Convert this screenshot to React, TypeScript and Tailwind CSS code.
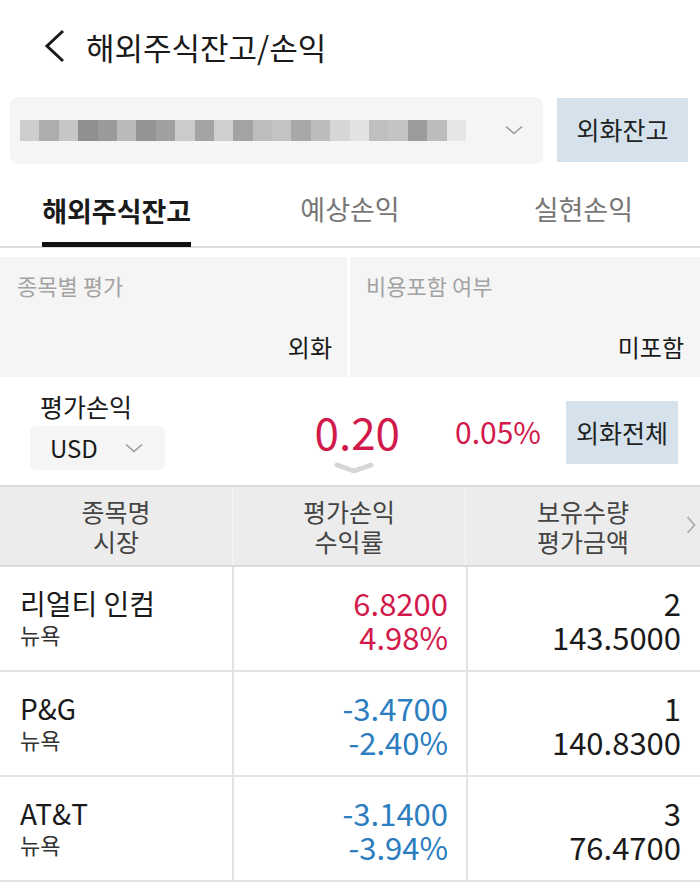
import React from 'react';

const FONT = '"Noto Sans CJK KR", "Noto Sans", sans-serif';

const RED = 'text-[#d2194c]';
const BLUE = 'text-[#2b7dc0]';

// blurred account number blocks
const blurShades = [
    '#cdcdcd', '#adadad', '#c6c6c6', '#8f8f8f', '#9a9a9a', '#bababa', '#949494', '#a0a0a0',
    '#cbcbcb', '#a4a4a4', '#cfcfcf', '#a3a3a3', '#bdbdbd', '#c3c3c3', '#a8a8a8', '#bcbcbc',
    '#d6d6d6', '#e2e2e2', '#bfbfbf', '#c4c4c4', '#9b9b9b', '#bcbcbc', '#e6e6e6',
];

interface Holding {
    name: string;
    market: string;
    pl: string;
    rate: string;
    qty: string;
    amount: string;
    up: boolean;
}

const holdings: Holding[] = [
    { name: '리얼티 인컴', market: '뉴욕', pl: '6.8200', rate: '4.98%', qty: '2', amount: '143.5000', up: true },
    { name: 'P&G', market: '뉴욕', pl: '-3.4700', rate: '-2.40%', qty: '1', amount: '140.8300', up: false },
    { name: 'AT&T', market: '뉴욕', pl: '-3.1400', rate: '-3.94%', qty: '3', amount: '76.4700', up: false },
];

const SmallChevron = ({ className = '' }: { className?: string }) => (
    <svg width="18" height="10" viewBox="0 0 18 10" className={className}>
        <path d="M1 1.5 L9 8.5 L17 1.5" fill="none" stroke="currentColor" strokeWidth="1.6" />
    </svg>
);

export default function App() {
    return (
        <div className="w-[700px] h-[891px] bg-white overflow-hidden text-[#1a1a1a]" style={{ fontFamily: FONT }}>
            {/* Header */}
            <div className="h-[92px] flex items-center pl-[42px] gap-[20px]">
                <svg width="24" height="34" viewBox="0 0 24 34">
                    <path d="M21 2 L5 17 L21 32" fill="none" stroke="#1a1a1a" strokeWidth="3" />
                </svg>
                <span className="text-[31px] leading-none">해외주식잔고/손익</span>
            </div>

            {/* Account selector */}
            <div className="flex items-center pl-[10px] pr-[12px] gap-[14px] h-[76px]">
                <div className="flex-1 h-[67px] bg-[#f5f5f5] rounded-[8px] flex items-center pl-[10px] pr-[20px]">
                    <div className="flex-1 flex">
                        {blurShades.map((c, i) => (
                            <div key={i} className="w-[19.4px] h-[21px]" style={{ backgroundColor: c }} />
                        ))}
                    </div>
                    <SmallChevron className="text-[#9a9a9a]" />
                </div>
                <button className="w-[131px] h-[64px] bg-[#d5e2ec] text-[25px] text-[#222]">외화잔고</button>
            </div>

            {/* Tabs */}
            <div className="grid grid-cols-3 h-[80px] border-b-2 border-[#dcdcdc]">
                <div className="flex justify-center">
                    <div className="flex flex-col justify-end">
                        <span className="text-[27px] font-bold leading-none mb-[18px]">해외주식잔고</span>
                        <div className="h-[5px] bg-[#111] -mb-[1px]" />
                    </div>
                </div>
                <div className="flex justify-center items-center pt-[10px] pb-[6px] text-[27px] text-[#777]">예상손익</div>
                <div className="flex justify-center items-center pt-[10px] pb-[6px] text-[27px] text-[#777]">실현손익</div>
            </div>

            {/* Options panel */}
            <div className="mt-[9px] grid grid-cols-[347px_1fr] gap-[3px] h-[120px]">
                <div className="bg-[#f5f5f5] flex flex-col justify-between pl-[17px] pr-[15px] pt-[17px] pb-[18px]">
                    <span className="text-[22px] text-[#a3a3a3] leading-none">종목별 평가</span>
                    <span className="text-[24px] text-right leading-none">외화</span>
                </div>
                <div className="bg-[#f5f5f5] flex flex-col justify-between pl-[16px] pr-[16px] pt-[17px] pb-[18px]">
                    <span className="text-[22px] text-[#a3a3a3] leading-none">비용포함 여부</span>
                    <span className="text-[24px] text-right leading-none">미포함</span>
                </div>
            </div>

            {/* Summary */}
            <div className="h-[110px] flex items-start border-b-2 border-[#dcdcdc]">
                <div className="w-[280px] pl-[30px] pt-[17px] flex flex-col">
                    <span className="pl-[10px] text-[25px] leading-none mb-[7px]">평가손익</span>
                    <div className="w-[135px] h-[44px] bg-[#f5f5f5] rounded-[6px] flex items-center pl-[20px] pr-[22px] justify-between">
                        <span className="text-[24px] leading-none">USD</span>
                        <SmallChevron className="text-[#9a9a9a]" />
                    </div>
                </div>
                <div className="relative w-[120px] flex justify-end pt-[32px]">
                    <span className={`text-[44px] leading-none ${RED}`}>0.20</span>
                    <div className="absolute left-[54px] top-[85px] w-[40px] h-[12px]">
                        <svg width="40" height="12" viewBox="0 0 40 12">
                            <path d="M3 3 L20 9 L37 3" fill="none" stroke="#d6d6d6" strokeWidth="5" strokeLinecap="round" strokeLinejoin="round" />
                        </svg>
                    </div>
                </div>
                <div className="w-[141px] flex justify-end pt-[39px]">
                    <span className={`text-[30px] leading-none ${RED}`}>0.05%</span>
                </div>
                <button className="ml-[25px] mt-[24px] w-[112px] h-[63px] bg-[#d5e2ec] text-[25px] text-[#222]">외화전체</button>
            </div>

            {/* Table header */}
            <div className="grid grid-cols-[232px_1px_232px_1px_1fr] h-[80px] bg-[#ececec] border-b-2 border-[#dcdcdc]">
                <div className="flex flex-col items-center justify-center text-[25px] leading-[30px] text-[#444]">
                    <span>종목명</span>
                    <span>시장</span>
                </div>
                <div className="bg-[#f6f6f6]" />
                <div className="flex flex-col items-center justify-center text-[25px] leading-[30px] text-[#444]">
                    <span>평가손익</span>
                    <span>수익률</span>
                </div>
                <div className="bg-[#f6f6f6]" />
                <div className="relative flex flex-col items-center justify-center text-[25px] leading-[30px] text-[#444]">
                    <span>보유수량</span>
                    <span>평가금액</span>
                    <svg width="10" height="20" viewBox="0 0 10 20" className="absolute right-[4px] top-[28px]">
                        <path d="M1.5 2 L8.5 10 L1.5 18" fill="none" stroke="#a8a8a8" strokeWidth="1.6" />
                    </svg>
                </div>
            </div>

            {/* Rows */}
            {holdings.map(h => (
                <div key={h.name} className="grid grid-cols-[232px_2px_232px_2px_1fr] h-[105px] border-b-2 border-[#e3e3e3]">
                    <div className="flex flex-col pl-[20px] pt-[19px]">
                        <span className="text-[28px] leading-[34px]">{h.name}</span>
                        <span className="text-[22px] leading-[28px] text-[#333]">{h.market}</span>
                    </div>
                    <div className="bg-[#e3e3e3]" />
                    <div className={`flex flex-col items-end pr-[18px] pt-[19px] text-[31px] leading-[34px] ${h.up ? RED : BLUE}`}>
                        <span>{h.pl}</span>
                        <span>{h.rate}</span>
                    </div>
                    <div className="bg-[#e3e3e3]" />
                    <div className="flex flex-col items-end pr-[19px] pt-[19px] text-[31px] leading-[34px]">
                        <span>{h.qty}</span>
                        <span>{h.amount}</span>
                    </div>
                </div>
            ))}
        </div>
    );
}
